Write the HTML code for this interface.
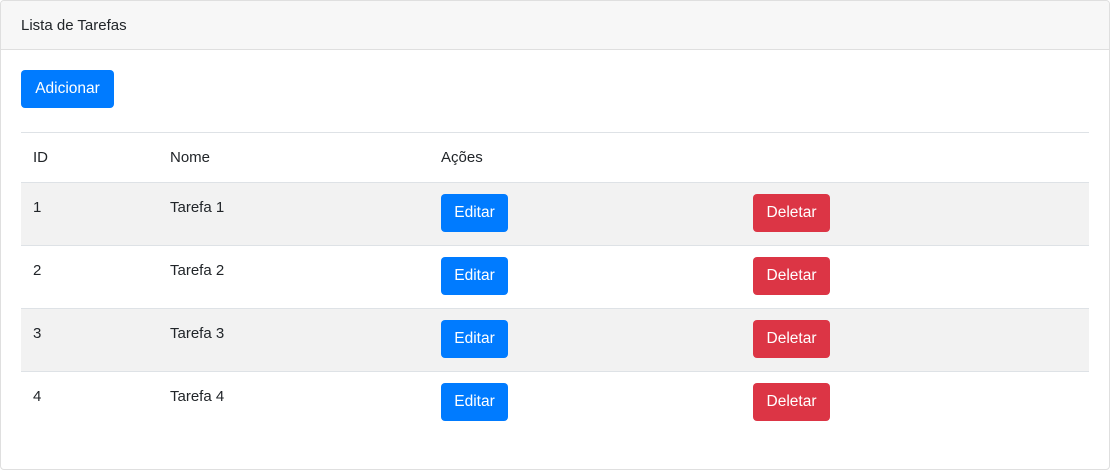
<!DOCTYPE html>
<html><head><meta charset="utf-8"><style>
*{box-sizing:border-box;margin:0;padding:0}
body{width:1110px;height:470px;background:#fff;font-family:"Liberation Sans",sans-serif;font-size:15px;color:#212529;overflow:hidden}
.card{position:absolute;left:0;top:0;width:1110px;height:470px;border:1px solid #dfdfdf;border-radius:4px;overflow:hidden}
.hdr{height:49px;background:#f7f7f7;border-bottom:1px solid #dfdfdf;padding:0 20px;line-height:50px}
.btn{position:absolute;height:38px;line-height:38px;border-radius:4px;color:#fff;font-size:15.5px;text-align:center}
.blue{background:#007bff}.red{background:#dc3545}
.add{left:20px;top:69px;width:93px}
.row{position:absolute;left:20px;width:1068px;border-top:1px solid #dee2e6}
.row.s{background:#f2f2f2}
.t{position:absolute;line-height:24px}
.e{left:420px;width:67px;top:11px}
.d{left:732px;width:77px;top:11px}
</style></head><body>
<div class="card">
<div class="hdr">Lista de Tarefas</div>
<span class="btn blue add">Adicionar</span>
<div class="row" style="top:131px;height:50px"><span class="t" style="left:12px;top:13px">ID</span><span class="t" style="left:149px;top:13px">Nome</span><span class="t" style="left:420px;top:13px">Ações</span></div>
<div class="row s" style="top:181px;height:63px"><span class="t" style="left:12px;top:13px">1</span><span class="t" style="left:149px;top:13px">Tarefa 1</span><span class="btn blue e">Editar</span><span class="btn red d">Deletar</span></div>
<div class="row" style="top:244px;height:63px"><span class="t" style="left:12px;top:13px">2</span><span class="t" style="left:149px;top:13px">Tarefa 2</span><span class="btn blue e">Editar</span><span class="btn red d">Deletar</span></div>
<div class="row s" style="top:307px;height:63px"><span class="t" style="left:12px;top:13px">3</span><span class="t" style="left:149px;top:13px">Tarefa 3</span><span class="btn blue e">Editar</span><span class="btn red d">Deletar</span></div>
<div class="row" style="top:370px;height:63px"><span class="t" style="left:12px;top:13px">4</span><span class="t" style="left:149px;top:13px">Tarefa 4</span><span class="btn blue e">Editar</span><span class="btn red d">Deletar</span></div>
</div>
</body></html>
